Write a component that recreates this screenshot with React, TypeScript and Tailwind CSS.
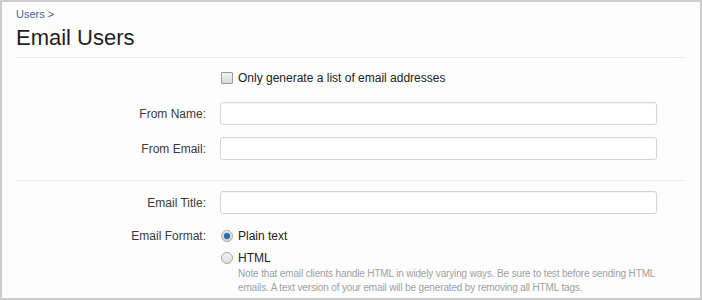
import React from "react";

function Row({ label, children, className = "" }: { label?: string; children: React.ReactNode; className?: string }) {
  return (
    <div className={`flex items-center ${className}`}>
      <div className="w-[190px] shrink-0 pr-0 text-right text-[12px] text-[#3a3a3a]">{label}</div>
      <div className="ml-[14px] flex-1">{children}</div>
    </div>
  );
}

function TextInput() {
  return (
    <input
      type="text"
      className="block h-[23px] w-[437px] rounded-[3px] border border-[#d4d4d4] bg-white shadow-[inset_0_1px_1px_rgba(0,0,0,0.04)] outline-none"
    />
  );
}

function Radio({ checked }: { checked?: boolean }) {
  return (
    <span className="flex h-[12px] w-[12px] items-center justify-center rounded-full border border-[#a9a9a9] bg-gradient-to-b from-[#f4f4f4] to-[#dcdcdc]">
      {checked && <span className="h-[6px] w-[6px] rounded-full bg-[#2a6d9e] shadow-[0_0_2px_#5fa5d8]" />}
    </span>
  );
}

export default function App() {
  return (
    <div
      className="box-border h-[300px] w-[702px] overflow-hidden border-2 border-[#cdcdcd] bg-[#fcfcfd] px-[14px]"
      style={{ fontFamily: '"Liberation Sans", Arial, sans-serif' }}
    >
      {/* Breadcrumb */}
      <div className="pt-[5px] text-[11px] leading-[14px] text-[#5a7a9a]">
        <a href="#" className="text-[#3b6a92]">Users</a> <span className="text-[#555]">&gt;</span>
      </div>

      {/* Title */}
      <h1 className="mt-[3px] text-[22px] leading-[28px] text-[#1f1f1f]">Email Users</h1>

      <div className="mt-[5px] h-px w-[669px] bg-[#e2eff1]" />

      {/* Checkbox */}
      <div className="mt-[13px] flex items-center pl-[205px] text-[12px] text-[#222]">
        <span className="h-[12px] w-[12px] rounded-[1px] border border-[#9a9a9a] bg-gradient-to-b from-[#f2f2f2] to-[#d8d8d8]" />
        <span className="ml-[5px] leading-[14px]">Only generate a list of email addresses</span>
      </div>

      <Row label="From Name:" className="mt-[17px]">
        <TextInput />
      </Row>
      <Row label="From Email:" className="mt-[12px]">
        <TextInput />
      </Row>

      <div className="mt-[20px] h-px w-[669px] bg-[#e2eff1]" />

      <Row label="Email Title:" className="mt-[10px]">
        <TextInput />
      </Row>

      <div className="mt-[14px] flex">
        <div className="w-[190px] shrink-0 text-right text-[12px] leading-[16px] text-[#3a3a3a]">Email Format:</div>
        <div className="ml-[15px] flex flex-col text-[12px] text-[#222]">
          <label className="flex h-[16px] items-center">
            <Radio checked />
            <span className="ml-[5px]">Plain text</span>
          </label>
          <label className="mt-[6px] flex h-[16px] items-center">
            <Radio />
            <span className="ml-[5px]">HTML</span>
          </label>
          <p className="ml-[17px] mt-[1px] w-[425px] text-[10px] leading-[14px] tracking-[-0.15px] text-[#a0a0a0]">
            Note that email clients handle HTML in widely varying ways. Be sure to test before sending HTML emails. A text version of your email will be generated by removing all HTML tags.
          </p>
        </div>
      </div>
    </div>
  );
}
